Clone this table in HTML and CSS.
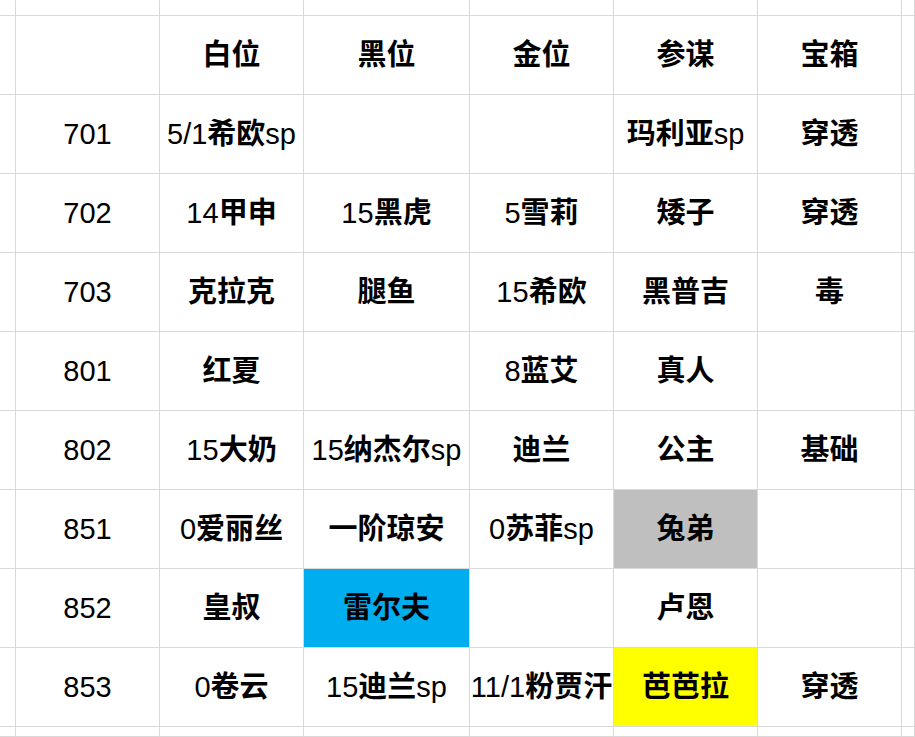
FILE: index.html
```html
<!DOCTYPE html>
<html lang="zh-CN">
<head>
<meta charset="utf-8">
<title>表格</title>
<link rel="stylesheet" href="styles.css">
</head>
<body>
<div class="sheet">
  <div class="c"></div><div class="c"></div><div class="c"></div><div class="c"></div><div class="c"></div><div class="c"></div><div class="c"></div><div class="c"></div>

  <div class="c"></div><div class="c"></div><div class="c"><b class="h">白位</b></div><div class="c"><b class="h">黑位</b></div><div class="c"><b class="h">金位</b></div><div class="c"><b class="h">参谋</b></div><div class="c"><b class="h">宝箱</b></div><div class="c"></div>

  <div class="c"></div><div class="c">701</div><div class="c">5/1<b class="h">希欧</b>sp</div><div class="c"></div><div class="c"></div><div class="c"><b class="h">玛利亚</b>sp</div><div class="c"><b class="h">穿透</b></div><div class="c"></div>

  <div class="c"></div><div class="c">702</div><div class="c">14<b class="h">甲申</b></div><div class="c">15<b class="h">黑虎</b></div><div class="c">5<b class="h">雪莉</b></div><div class="c"><b class="h">矮子</b></div><div class="c"><b class="h">穿透</b></div><div class="c"></div>

  <div class="c"></div><div class="c">703</div><div class="c"><b class="h">克拉克</b></div><div class="c"><b class="h">腿鱼</b></div><div class="c">15<b class="h">希欧</b></div><div class="c"><b class="h">黑普吉</b></div><div class="c"><b class="h">毒</b></div><div class="c"></div>

  <div class="c"></div><div class="c">801</div><div class="c"><b class="h">红夏</b></div><div class="c"></div><div class="c">8<b class="h">蓝艾</b></div><div class="c"><b class="h">真人</b></div><div class="c"></div><div class="c"></div>

  <div class="c"></div><div class="c">802</div><div class="c">15<b class="h">大奶</b></div><div class="c">15<b class="h">纳杰尔</b>sp</div><div class="c"><b class="h">迪兰</b></div><div class="c"><b class="h">公主</b></div><div class="c"><b class="h">基础</b></div><div class="c"></div>

  <div class="c"></div><div class="c">851</div><div class="c">0<b class="h">爱丽丝</b></div><div class="c"><b class="h">一阶琼安</b></div><div class="c">0<b class="h">苏菲</b>sp</div><div class="c gray"><b class="h">兔弟</b></div><div class="c"></div><div class="c"></div>

  <div class="c"></div><div class="c">852</div><div class="c"><b class="h">皇叔</b></div><div class="c blue"><b class="h">雷尔夫</b></div><div class="c"></div><div class="c"><b class="h">卢恩</b></div><div class="c"></div><div class="c"></div>

  <div class="c"></div><div class="c">853</div><div class="c">0<b class="h">卷云</b></div><div class="c">15<b class="h">迪兰</b>sp</div><div class="c">11/1<b class="h">粉贾汗</b></div><div class="c yellow"><b class="h">芭芭拉</b></div><div class="c"><b class="h">穿透</b></div><div class="c"></div>

  <div class="c"></div><div class="c"></div><div class="c"></div><div class="c"></div><div class="c"></div><div class="c"></div><div class="c"></div><div class="c"></div>
</div>
</body>
</html>
```
FILE: styles.css
```css
html, body {
  margin: 0;
  padding: 0;
  background: #ffffff;
}

.sheet {
  display: grid;
  grid-template-columns: 16px 144px 144px 166px 144px 144px 144px 1fr;
  grid-template-rows: 16px repeat(9, 79px) 1fr;
  width: 915px;
  height: 737px;
  overflow: hidden;
  font-family: "Liberation Sans", "Noto Sans CJK SC", sans-serif;
  font-size: 29px;
  font-weight: 400;
  line-height: 1;
  color: #000000;
}

.c {
  box-sizing: border-box;
  border-right: 1px solid #d9d9d9;
  border-bottom: 1px solid #d9d9d9;
  display: flex;
  align-items: center;
  justify-content: center;
  white-space: nowrap;
  min-width: 0;
}

.h {
  font-weight: 700;
}

.gray {
  background: #bfbfbf;
}

.blue {
  background: #00aeef;
}

.yellow {
  background: #ffff00;
}
```
